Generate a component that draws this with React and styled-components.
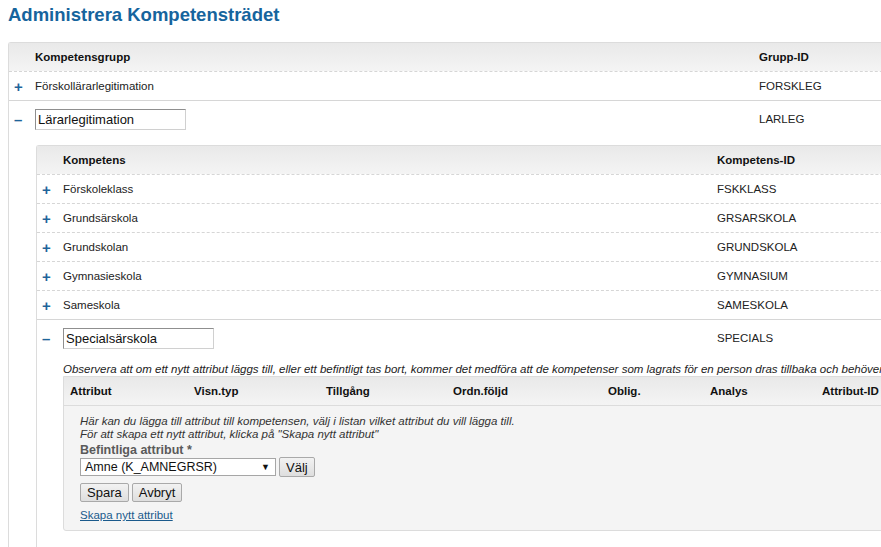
import React from "react";
import styled, { createGlobalStyle } from "styled-components";

const GlobalStyle = createGlobalStyle`
  html, body {
    margin: 0;
    padding: 0;
    overflow: hidden;
    background: #fff;
  }
  body {
    font-family: "Liberation Sans", Arial, sans-serif;
    font-size: 11.5px;
    color: #222;
  }
`;

const Page = styled.div`
  width: 1100px;
  padding: 4px 0 0 8px;
`;

const Title = styled.h1`
  margin: 0 0 16px;
  font-size: 18.5px;
  line-height: 22px;
  font-weight: bold;
  color: #16649d;
`;

const Tree = styled.div`
  border-left: 1px solid #dcdcdc;
  border-top: 1px solid #dcdcdc;
  border-top-left-radius: 3px;
  padding-bottom: ${(p) => p.$bottom || 0}px;
`;

const Row = styled.div`
  display: grid;
  grid-template-columns: ${(p) => p.$cols};
  align-items: center;
  height: ${(p) => (p.$open ? 36 : 28)}px;
  border-top: 1px ${(p) => (p.$open ? "solid" : "dashed")} #d6d6d6;
`;

const HeadRow = styled.div`
  display: grid;
  grid-template-columns: ${(p) => p.$cols};
  align-items: center;
  height: 28px;
  background: linear-gradient(to bottom, #e9e9e9, #f4f4f4);
  font-weight: bold;
  color: #111;
`;

const Toggle = styled.span`
  padding-left: 5px;
  font-size: 15px;
  font-weight: bold;
  line-height: 1;
  color: #1f6499;
`;

const NameInput = styled.input`
  box-sizing: border-box;
  width: 151px;
  height: 21px;
  padding: 0 2px;
  margin: 0;
  font-family: "Liberation Sans", Arial, sans-serif;
  font-size: 13px;
  color: #111;
  background: #fff;
  border: 1px solid #d0d0d0;
  border-top-color: #8f8f8f;
  border-left-color: #8f8f8f;
  outline: none;
`;

const Nested = styled.div`
  margin: 8px 0 0 27px;
`;

const Details = styled.div`
  padding-left: 26px;
`;

const Note = styled.p`
  margin: 7px 0 0;
  line-height: 13px;
  font-style: italic;
  white-space: nowrap;
  color: #222;
`;

const AttrTable = styled.div`
  border: 1px solid #dcdcdc;
  border-radius: 0 0 0 3px;
  background: #f4f4f4;
`;

const AttrHead = styled.div`
  display: grid;
  grid-template-columns: 124px 132px 127px 155px 102px 112px 1fr;
  align-items: center;
  height: 28px;
  padding-left: 6px;
  background: linear-gradient(to bottom, #e9e9e9, #f4f4f4);
  border-bottom: 1px solid #dcdcdc;
  font-weight: bold;
  color: #111;
`;

const AttrBody = styled.div`
  padding: 9px 16px 8px;
`;

const Help = styled.p`
  margin: 0;
  line-height: 13px;
  font-style: italic;
  color: #333;
`;

const FieldLabel = styled.label`
  display: block;
  margin-top: 2px;
  line-height: 14px;
  font-size: 12.5px;
  font-weight: bold;
  color: #5a5a5a;
`;

const Line = styled.div`
  display: flex;
  align-items: center;
  gap: 3px;
  margin-top: ${(p) => p.$gap || 0}px;
`;

const Select = styled.div`
  box-sizing: border-box;
  display: flex;
  align-items: center;
  justify-content: space-between;
  width: 196px;
  height: 18px;
  padding: 0 5px 0 4px;
  font-size: 12.5px;
  color: #111;
  background: #fff;
  border: 1px solid #a6a6a6;
  span {
    font-size: 9px;
  }
`;

const Button = styled.button`
  box-sizing: border-box;
  height: ${(p) => p.$h || 19}px;
  padding: 0 6px;
  margin: 0;
  font-family: "Liberation Sans", Arial, sans-serif;
  font-size: 13px;
  color: #111;
  background: linear-gradient(to bottom, #f2f2f2, #dedede);
  border: 1px solid #a9a9a9;
  border-radius: 2px;
`;

const Link = styled.a`
  display: block;
  margin-top: 6px;
  line-height: 14px;
  color: #1a5a8c;
  text-decoration: underline;
  cursor: pointer;
`;

const groupCols = "26px 724px 1fr";
const compCols = "26px 654px 1fr";

const competences = [
  ["Förskoleklass", "FSKKLASS"],
  ["Grundsärskola", "GRSARSKOLA"],
  ["Grundskolan", "GRUNDSKOLA"],
  ["Gymnasieskola", "GYMNASIUM"],
  ["Sameskola", "SAMESKOLA"],
];

const attrColumns = ["Attribut", "Visn.typ", "Tillgång", "Ordn.följd", "Oblig.", "Analys", "Attribut-ID"];

const App = () => {
  return (
    <Page>
      <GlobalStyle />
      <Title>Administrera Kompetensträdet</Title>
      <Tree $bottom={40}>
        <HeadRow $cols={groupCols}>
          <span />
          <span>Kompetensgrupp</span>
          <span>Grupp-ID</span>
        </HeadRow>
        <Row $cols={groupCols}>
          <Toggle>+</Toggle>
          <span>Förskollärarlegitimation</span>
          <span>FORSKLEG</span>
        </Row>
        <Row $cols={groupCols} $open>
          <Toggle>–</Toggle>
          <span>
            <NameInput defaultValue="Lärarlegitimation" />
          </span>
          <span>LARLEG</span>
        </Row>
        <Nested>
          <Tree $bottom={40}>
            <HeadRow $cols={compCols}>
              <span />
              <span>Kompetens</span>
              <span>Kompetens-ID</span>
            </HeadRow>
            {competences.map(([name, id]) => (
              <Row $cols={compCols} key={id}>
                <Toggle>+</Toggle>
                <span>{name}</span>
                <span>{id}</span>
              </Row>
            ))}
            <Row $cols={compCols} $open>
              <Toggle>–</Toggle>
              <span>
                <NameInput defaultValue="Specialsärskola" />
              </span>
              <span>SPECIALS</span>
            </Row>
            <Details>
              <Note>
                Observera att om ett nytt attribut läggs till, eller ett befintligt tas bort, kommer det
                medföra att de kompetenser som lagrats för en person dras tillbaka och behöver återigen
                godkännas.
              </Note>
              <AttrTable>
                <AttrHead>
                  {attrColumns.map((c) => (
                    <span key={c}>{c}</span>
                  ))}
                </AttrHead>
                <AttrBody>
                  <Help>
                    Här kan du lägga till attribut till kompetensen, välj i listan vilket attribut du vill
                    lägga till.
                  </Help>
                  <Help>För att skapa ett nytt attribut, klicka på "Skapa nytt attribut"</Help>
                  <FieldLabel>Befintliga attribut *</FieldLabel>
                  <Line>
                    <Select>
                      Amne (K_AMNEGRSR)
                      <span>▼</span>
                    </Select>
                    <Button $h={20}>Välj</Button>
                  </Line>
                  <Line $gap={6}>
                    <Button>Spara</Button>
                    <Button>Avbryt</Button>
                  </Line>
                  <Link>Skapa nytt attribut</Link>
                </AttrBody>
              </AttrTable>
            </Details>
          </Tree>
        </Nested>
      </Tree>
    </Page>
  );
};

export default App;
